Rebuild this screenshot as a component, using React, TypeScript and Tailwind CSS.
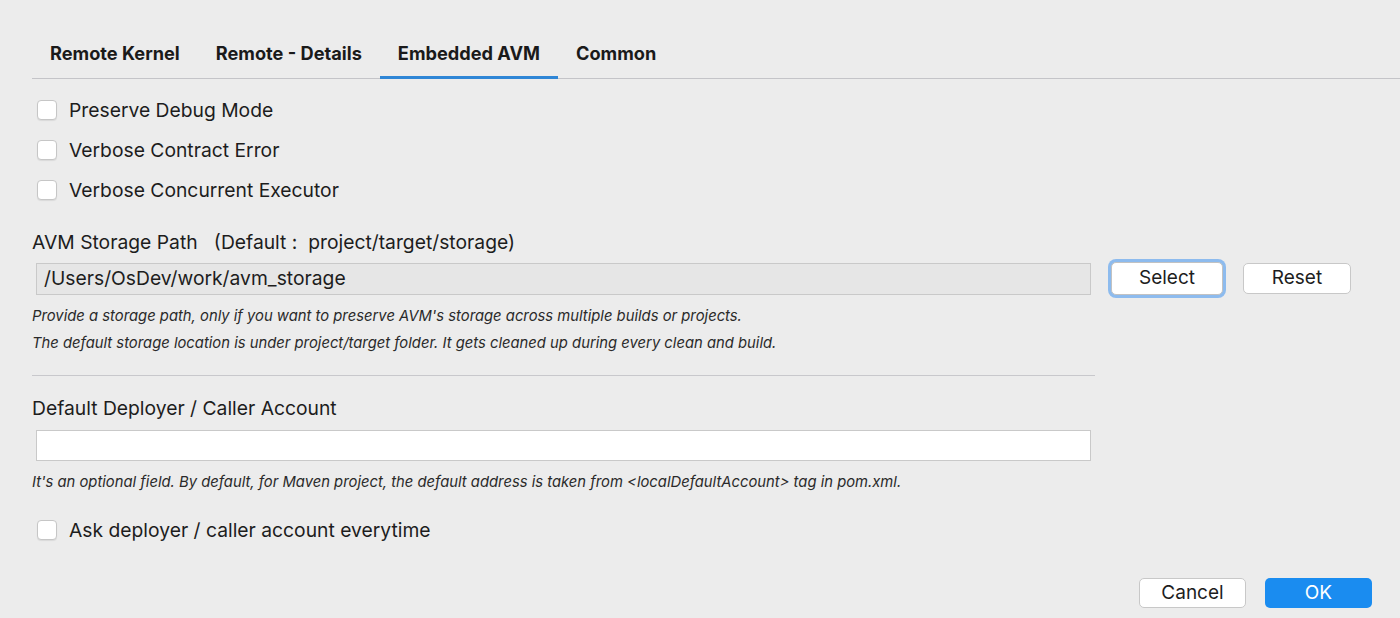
import React from "react";

const tabs = ["Remote Kernel", "Remote - Details", "Embedded AVM", "Common"];

const CheckRow = ({ label }: { label: string }) => (
  <label className="flex items-center h-[40px]">
    <span className="w-[20px] h-[20px] rounded-[4px] border border-[#c6c6c6] bg-white shadow-[0_1px_1px_rgba(0,0,0,0.08)] ml-[37px]" />
    <span className="ml-[12px] text-[19.3px] text-[#1d1d1d]">{label}</span>
  </label>
);

const Hint = ({ children }: { children: React.ReactNode }) => (
  <p className="italic text-[14.8px] text-[#2a2a2a] leading-[27px] ml-[32px]">{children}</p>
);

const App = () => {
  return (
    <div
      className="w-[1400px] h-[618px] bg-[#ececec] overflow-hidden flex flex-col"
      style={{ fontFamily: "Inter, 'Liberation Sans', sans-serif" }}
    >
      {/* tab bar */}
      <div className="mt-[32px] ml-[32px] flex border-b border-[#c4c4c8] h-[47px]">
        {tabs.map((t, i) => (
          <div
            key={t}
            className={
              "px-[18px] flex items-start pt-[8px] text-[18.2px] font-bold text-[#1a1a1a] " +
              (i === 2 ? "border-b-[3px] border-[#2f86d6] -mb-px" : "")
            }
          >
            {t}
          </div>
        ))}
      </div>

      <div className="mt-[11px] flex flex-col">
        <CheckRow label="Preserve Debug Mode" />
        <CheckRow label="Verbose Contract Error" />
        <CheckRow label="Verbose Concurrent Executor" />
      </div>

      <div className="mt-[18px] ml-[32px] text-[19.3px] text-[#1d1d1d] h-[26px] whitespace-pre">
        {"AVM Storage Path   (Default :  project/target/storage)"}
      </div>

      <div className="mt-[8px] flex items-center">
        <div className="ml-[36px] w-[1055px] h-[32px] border border-[#c9c9c9] bg-[#e6e6e6] flex items-center pl-[7px] text-[19.3px] text-[#1d1d1d]">
          /Users/OsDev/work/avm_storage
        </div>
        <button className="ml-[20px] w-[112px] h-[33px] rounded-[5px] bg-white border border-[#c2c2c2] ring-[3px] ring-[#8dbbee] text-[19px] text-[#1d1d1d]">
          Select
        </button>
        <button className="ml-[20px] w-[108px] h-[31px] rounded-[5px] bg-white border border-[#c8c8c8] text-[19px] text-[#1d1d1d]">
          Reset
        </button>
      </div>

      <div className="mt-[8px]">
        <Hint>Provide a storage path, only if you want to preserve AVM's storage across multiple builds or projects.</Hint>
        <Hint>The default storage location is under project/target folder. It gets cleaned up during every clean and build.</Hint>
      </div>

      <div className="mt-[18px] ml-[32px] w-[1063px] h-px bg-[#c8c8cc]" />

      <div className="mt-[18px] ml-[32px] text-[19.3px] text-[#1d1d1d] h-[26px]">Default Deployer / Caller Account</div>

      <div className="mt-[10px] ml-[36px] w-[1055px] h-[31px] border border-[#c9c9c9] bg-white" />

      <div className="mt-[8px]">
        <Hint>It's an optional field. By default, for Maven project, the default address is taken from &lt;localDefaultAccount&gt; tag in pom.xml.</Hint>
      </div>

      <div className="mt-[14px]">
        <CheckRow label="Ask deployer / caller account everytime" />
      </div>

      <div className="mt-[28px] flex justify-end pr-[28px] gap-[19px]">
        <button className="w-[107px] h-[30px] rounded-[5px] bg-white border border-[#c8c8c8] text-[19px] text-[#1d1d1d]">
          Cancel
        </button>
        <button className="w-[107px] h-[30px] rounded-[5px] bg-[#1a8cf0] text-[19px] text-white">OK</button>
      </div>
    </div>
  );
};

export default App;
